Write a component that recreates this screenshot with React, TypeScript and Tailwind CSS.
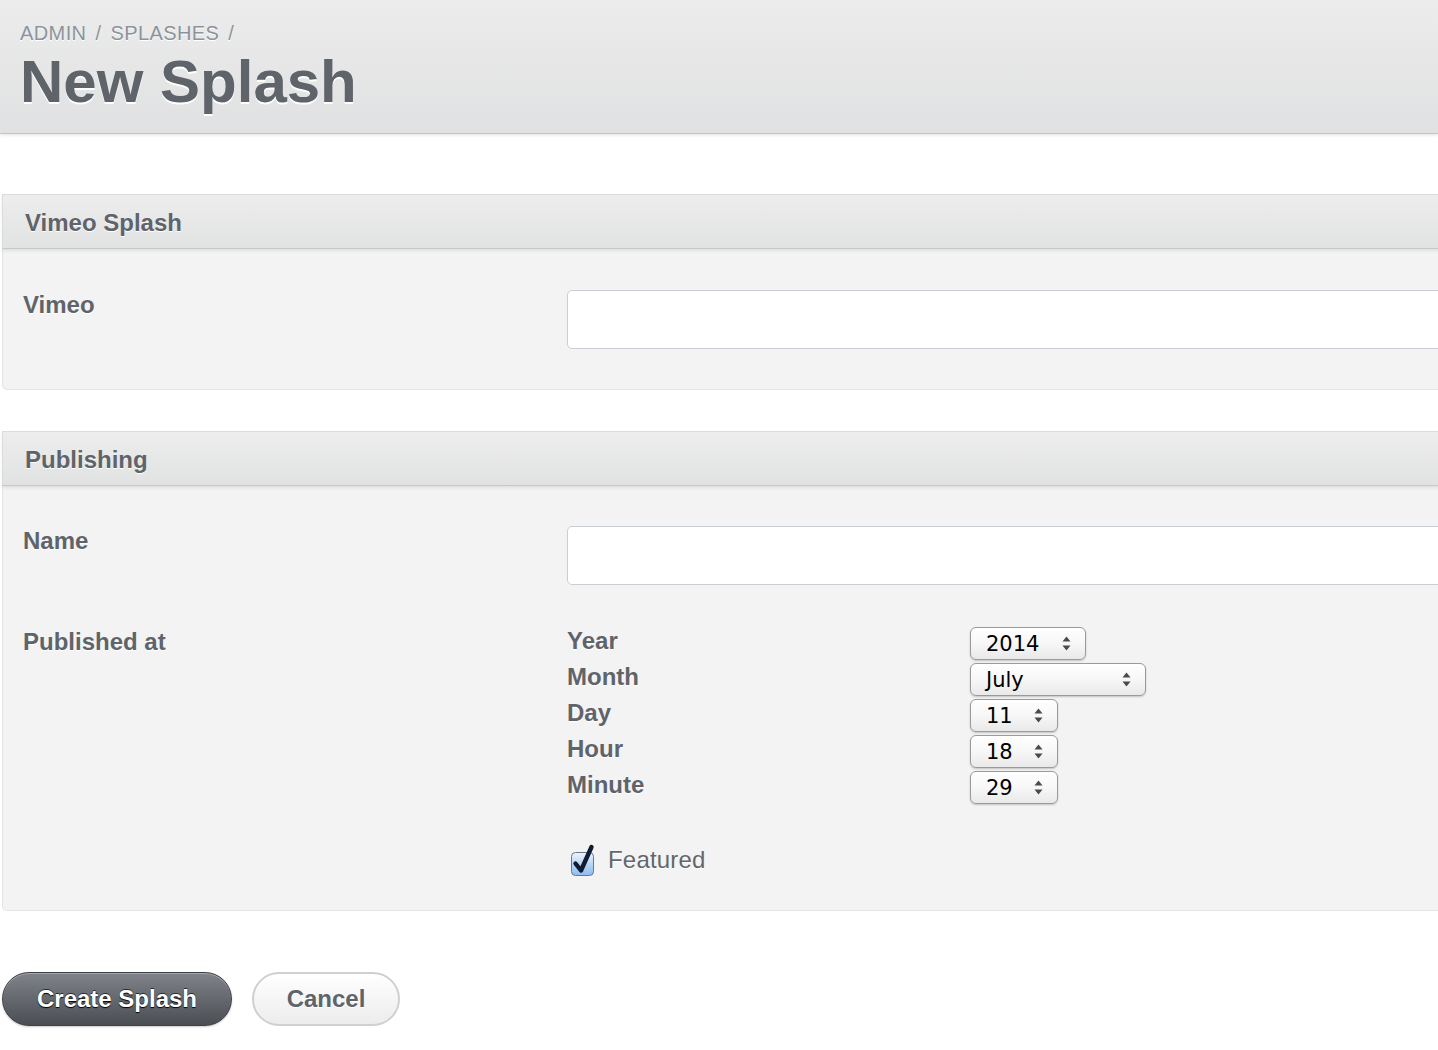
import React from "react";

const labelCls =
  "font-['Liberation_Sans',Arial,sans-serif] font-bold text-[24px] leading-[30px] text-[#5f636a] [text-shadow:0_1px_0_#ffffff]";

function Arrows() {
  return (
    <svg width="9" height="15" viewBox="0 0 9 15" className="shrink-0">
      <path d="M4.5 0.5 L8.5 5.5 L0.5 5.5 Z" fill="#4a4a4a" />
      <path d="M4.5 14.5 L8.5 9.5 L0.5 9.5 Z" fill="#4a4a4a" />
    </svg>
  );
}

function FakeSelect({ value, width }: { value: string; width: string }) {
  return (
    <div
      className={`${width} h-[33px] flex items-center justify-between pl-[15px] pr-[14px] rounded-[6px] border border-[#9a9a9a] bg-gradient-to-b from-[#ffffff] via-[#f7f7f7] to-[#e9e9e9] shadow-[0_1px_2px_rgba(0,0,0,0.2)] font-['DejaVu_Sans',Verdana,sans-serif] text-[21px] leading-none text-black`}
    >
      <span className="pt-[1px]">{value}</span>
      <Arrows />
    </div>
  );
}

function Legend({ children }: { children: React.ReactNode }) {
  return (
    <div className="h-[55px] flex items-center pl-[22px] pt-[3px] border-t border-l border-[#dcdcdc] border-b border-b-[#c6c8c9] bg-gradient-to-b from-[#ededed] to-[#e1e2e2] shadow-[0_2px_3px_rgba(0,0,0,0.08)] relative z-10">
      <span className={labelCls}>{children}</span>
    </div>
  );
}

function Checkbox() {
  return (
    <svg width="30" height="32" viewBox="0 0 30 32" className="shrink-0">
      <defs>
        <linearGradient id="cb" x1="0" y1="0" x2="0" y2="1">
          <stop offset="0" stopColor="#eef5fd" />
          <stop offset="0.5" stopColor="#b9d6f5" />
          <stop offset="1" stopColor="#8dbdf0" />
        </linearGradient>
      </defs>
      <rect x="1.5" y="8.5" width="22" height="23" rx="4" fill="url(#cb)" stroke="#6b7888" strokeWidth="1" />
      <path
        d="M5.5 19.5 L11 26.5 L21.5 3"
        fill="none"
        stroke="#101c33"
        strokeWidth="4.4"
        strokeLinecap="round"
        strokeLinejoin="round"
      />
    </svg>
  );
}

export default function App() {
  return (
    <div className="w-[1438px] min-h-[1050px] overflow-hidden bg-white font-['Liberation_Sans',Arial,sans-serif]">
      {/* Header */}
      <div className="h-[134px] pt-[21px] pl-[20px] bg-gradient-to-b from-[#ececec] to-[#e0e1e2] border-b border-[#c4c5c6] shadow-[0_1px_3px_rgba(0,0,0,0.12)]">
        <div className="flex items-center text-[20px] leading-[24px] tracking-[0.4px] text-[#8b939c] [text-shadow:0_1px_0_#ffffff]">
          <span>ADMIN</span>
          <span className="mx-[9px]">/</span>
          <span>SPLASHES</span>
          <span className="mx-[9px]">/</span>
        </div>
        <h1 className="mt-[7px] text-[60px] leading-[60px] font-bold text-[#5f636a] [text-shadow:0_2px_0_#ffffff]">
          New Splash
        </h1>
      </div>

      {/* Vimeo Splash fieldset */}
      <div className="mt-[60px] ml-[2px] w-[1500px]">
        <Legend>Vimeo Splash</Legend>
        <div className="bg-[#f3f3f3] border-l border-b border-[#e4e4e4] rounded-bl-[5px] pt-[41px] pb-[40px] flex">
          <div className="w-[564px] pl-[20px]">
            <span className={labelCls}>Vimeo</span>
          </div>
          <div className="flex-1">
            <div className="h-[59px] bg-white border-[1.5px] border-[#c9ced4] rounded-[5px]" />
          </div>
        </div>
      </div>

      {/* Publishing fieldset */}
      <div className="mt-[41px] ml-[2px] w-[1500px]">
        <Legend>Publishing</Legend>
        <div className="bg-[#f3f3f3] border-l border-b border-[#e4e4e4] rounded-bl-[5px] pt-[40px] pb-[34px]">
          <div className="flex">
            <div className="w-[564px] pl-[20px]">
              <span className={labelCls}>Name</span>
            </div>
            <div className="flex-1">
              <div className="h-[59px] bg-white border-[1.5px] border-[#c9ced4] rounded-[5px]" />
            </div>
          </div>

          <div className="flex mt-[42px]">
            <div className="w-[564px] pl-[20px]">
              <span className={labelCls}>Published at</span>
            </div>
            <div className="flex-1 flex flex-col gap-[3px]">
              {[
                { l: "Year", v: "2014", w: "w-[116px]" },
                { l: "Month", v: "July", w: "w-[176px]" },
                { l: "Day", v: "11", w: "w-[88px]" },
                { l: "Hour", v: "18", w: "w-[88px]" },
                { l: "Minute", v: "29", w: "w-[88px]" },
              ].map((r) => (
                <div key={r.l} className="flex items-center h-[33px]">
                  <div className="w-[403px] -mt-[6px]">
                    <span className={labelCls}>{r.l}</span>
                  </div>
                  <FakeSelect value={r.v} width={r.w} />
                </div>
              ))}
            </div>
          </div>

          <div className="flex mt-[48px]">
            <div className="w-[564px]" />
            <div className="flex items-center gap-[8px] -mt-[8px]">
              <div className="ml-[3px]">
                <Checkbox />
              </div>
              <span className="text-[24px] leading-[30px] tracking-[0.2px] text-[#62666d] [text-shadow:0_1px_0_#ffffff]">
                Featured
              </span>
            </div>
          </div>
        </div>
      </div>

      {/* Buttons */}
      <div className="mt-[61px] ml-[2px] flex gap-[20px]">
        <button className="w-[230px] h-[54px] rounded-full border border-[#3d4045] bg-gradient-to-b from-[#80848a] to-[#4b4e53] shadow-[inset_0_1px_0_rgba(255,255,255,0.3),0_1px_2px_rgba(0,0,0,0.2)] text-white font-bold text-[24px] [text-shadow:0_-1px_0_#2a2c30,0_1px_1px_#000000]">
          Create Splash
        </button>
        <button className="w-[148px] h-[54px] rounded-full border-2 border-[#d0d0d0] bg-gradient-to-b from-[#ffffff] to-[#ececec] text-[#5f636a] font-bold text-[24px] [text-shadow:0_1px_0_#ffffff]">
          Cancel
        </button>
      </div>
    </div>
  );
}
